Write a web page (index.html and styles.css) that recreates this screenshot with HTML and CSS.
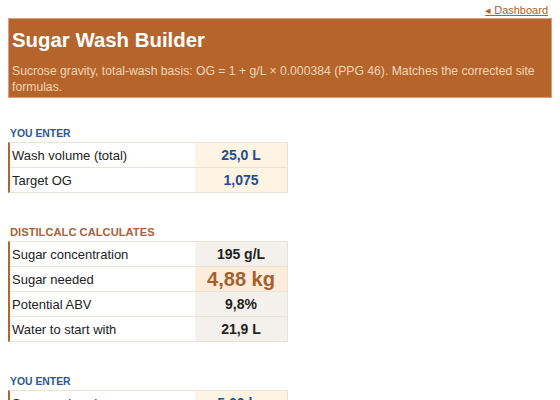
FILE: index.html
```html
<!DOCTYPE html>
<html lang="en">
<head>
<meta charset="utf-8">
<title>Sugar Wash Builder</title>
<link rel="stylesheet" href="styles.css">
</head>
<body>
<nav class="topnav"><a class="back" href="#">&#9666; Dashboard</a></nav>
<header class="hero">
  <h1 class="hero-title">Sugar Wash Builder</h1>
  <p class="hero-sub">Sucrose gravity, total-wash basis: OG = 1 + g/L &times; 0.000384 (PPG 46). Matches the corrected site formulas.</p>
</header>

<section class="block">
  <h2 class="block-head head-in">YOU ENTER</h2>
  <div class="kv">
    <div class="row"><div class="label">Wash volume (total)</div><div class="value v-in">25,0 L</div></div>
    <div class="row"><div class="label">Target OG</div><div class="value v-in">1,075</div></div>
  </div>
</section>

<section class="block">
  <h2 class="block-head head-calc">DISTILCALC CALCULATES</h2>
  <div class="kv">
    <div class="row"><div class="label">Sugar concentration</div><div class="value v-calc">195 g/L</div></div>
    <div class="row"><div class="label">Sugar needed</div><div class="value v-hi">4,88 kg</div></div>
    <div class="row"><div class="label">Potential ABV</div><div class="value v-calc">9,8%</div></div>
    <div class="row"><div class="label">Water to start with</div><div class="value v-calc">21,9 L</div></div>
  </div>
</section>

<section class="block">
  <h2 class="block-head head-in">YOU ENTER</h2>
  <div class="kv">
    <div class="row"><div class="label">Sugar on hand</div><div class="value v-in">5,00 kg</div></div>
    <div class="row"><div class="label">Batches</div><div class="value v-in">1</div></div>
  </div>
</section>
</body>
</html>
```

FILE: styles.css
```css
html, body {
  background: #ffffff;
}
body {
  margin: 4px 8px 8px;
  font-family: "Liberation Sans", Arial, sans-serif;
  color: #222222;
}

.topnav {
  text-align: right;
  padding-right: 4px;
  font-size: 11px;
  line-height: 12px;
}
.back {
  color: #b0612a;
  text-decoration: underline;
}

.hero {
  margin-top: 2px;
  background: #b5652b;
  border: 1px solid #dba07a;
  padding: 9px 3px 2px;
  color: #ffffff;
}
.hero-title {
  margin: 0;
  font-size: 20.4px;
  line-height: 24px;
  font-weight: bold;
}
.hero-sub {
  margin: 11px 0 0;
  font-size: 12.2px;
  line-height: 16px;
  color: #f4d4b6;
}

.block {
  margin-top: 33px;
}
.hero + .block {
  margin-top: 29px;
}
.block-head {
  margin: 0 0 2px;
  line-height: 13px;
  font-weight: bold;
  padding-left: 2px;
}
.head-in {
  font-size: 10.4px;
  color: #2b5799;
}
.head-calc {
  font-size: 11.2px;
  color: #a8633a;
}

.kv {
  width: 280px;
  box-sizing: border-box;
  border: 1px solid #ece3d7;
  border-left: 2px solid #b5652b;
}
.row {
  display: grid;
  grid-template-columns: 1fr 92px;
  height: 24px;
}
.row + .row {
  border-top: 1px solid #ece3d7;
}
.label {
  display: flex;
  align-items: center;
  padding-left: 2px;
  font-size: 13px;
  background: #ffffff;
}
.value {
  display: flex;
  align-items: center;
  justify-content: center;
  font-size: 14px;
  font-weight: bold;
}
.v-in {
  background: #fdf4e3;
  color: #1f4f8e;
}
.v-calc {
  background: #f4f1ec;
  color: #222222;
}
.v-hi {
  background: #fdecdb;
  color: #a55f2d;
  font-size: 20px;
}
```
